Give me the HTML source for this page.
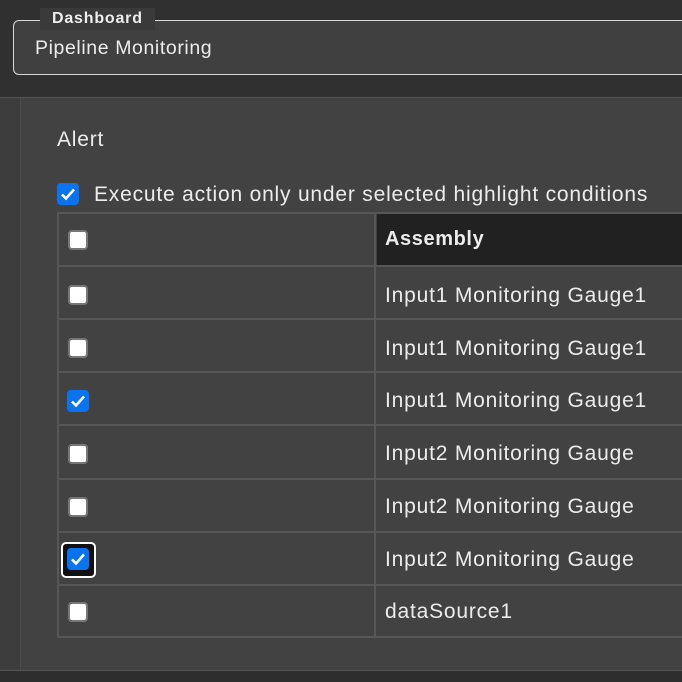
<!DOCTYPE html>
<html><head><meta charset="utf-8"><style>
*{margin:0;padding:0;box-sizing:border-box}
body{width:682px;height:682px;overflow:hidden;background:#303030;font-family:"Liberation Sans",sans-serif;color:#ececec;position:relative}
.fs{position:absolute;left:13px;top:20px;width:700px;height:55px;border:1px solid #d8d8d8;border-radius:6px;background:#404040}
.lg{position:absolute;left:40px;top:8px;height:22px;padding:0 12px;background:#3a3a3a;font-weight:bold;font-size:16px;line-height:22px;color:#eee;letter-spacing:0.8px}
.pm{position:absolute;left:35px;top:37px;font-size:19.5px;letter-spacing:0.6px}
.main{position:absolute;left:0;top:97px;width:682px;height:573px;background:#424242;border-top:1px solid #555}
.strip{position:absolute;left:0;top:0;width:21px;height:573px;background:#3d3d3d;border-right:1px solid #4a4a4a}
.bot{position:absolute;left:0;top:670px;width:682px;height:12px;background:#2e2e2e;border-top:1px solid #555}
.t{position:absolute;font-size:21px;letter-spacing:0.8px;white-space:nowrap}
.cb{position:absolute;width:20px;height:20px;border-radius:4px;background:#fff;border:2px solid #777}
.cb.on{background:#0a74f0;border:none;width:22px;height:22px}
.cb.on svg{position:absolute;left:3px;top:3px}
.hl{position:absolute;left:58px;width:640px;height:2px;background:#575757}
.vl{position:absolute;top:212px;width:2px;height:426px;background:#575757}
</style></head><body>
<div class="fs"></div>
<div class="lg">Dashboard</div>
<div class="pm">Pipeline Monitoring</div>
<div class="main"><div class="strip"></div></div>
<div class="bot"></div>
<div class="t" style="left:57px;top:128px">Alert</div>
<div class="cb on" style="left:57px;top:183px"><svg width="16" height="16" viewBox="0 0 16 16"><path d="M2 8.5l4 4 8-9" stroke="#fff" stroke-width="2.6" fill="none"/></svg></div>
<div class="t" style="left:94px;top:183px">Execute action only under selected highlight conditions</div>
<div style="position:absolute;left:377px;top:214px;width:310px;height:51px;background:#212121"></div>
<div class="hl" style="top:212px"></div><div class="hl" style="top:265px"></div><div class="hl" style="top:318px"></div><div class="hl" style="top:371px"></div><div class="hl" style="top:424px"></div><div class="hl" style="top:478px"></div><div class="hl" style="top:531px"></div><div class="hl" style="top:584px"></div><div class="hl" style="top:636px"></div>
<div class="vl" style="left:57px"></div><div class="vl" style="left:374px"></div>
<div class="t" style="left:385px;top:228px;font-weight:bold;font-size:20px;letter-spacing:0.6px">Assembly</div>
<div class="cb" style="left:68px;top:230px"></div>
<div class="cb" style="left:68px;top:285px"></div><div class="t" style="left:385px;top:284px">Input1 Monitoring Gauge1</div>
<div class="cb" style="left:68px;top:338px"></div><div class="t" style="left:385px;top:337px">Input1 Monitoring Gauge1</div>
<div class="cb on" style="left:67px;top:390px"><svg width="16" height="16" viewBox="0 0 16 16"><path d="M2 8.5l4 4 8-9" stroke="#fff" stroke-width="2.6" fill="none"/></svg></div><div class="t" style="left:385px;top:389px">Input1 Monitoring Gauge1</div>
<div class="cb" style="left:68px;top:444px"></div><div class="t" style="left:385px;top:442px">Input2 Monitoring Gauge</div>
<div class="cb" style="left:68px;top:497px"></div><div class="t" style="left:385px;top:495px">Input2 Monitoring Gauge</div>
<div style="position:absolute;left:61px;top:542px;width:35px;height:36px;border:2px solid #fff;border-radius:5px;background:#111"></div>
<div class="cb on" style="left:67px;top:548px"><svg width="16" height="16" viewBox="0 0 16 16"><path d="M2 8.5l4 4 8-9" stroke="#fff" stroke-width="2.6" fill="none"/></svg></div><div class="t" style="left:385px;top:548px">Input2 Monitoring Gauge</div>
<div class="cb" style="left:68px;top:602px"></div><div class="t" style="left:385px;top:600px">dataSource1</div>
</body></html>
